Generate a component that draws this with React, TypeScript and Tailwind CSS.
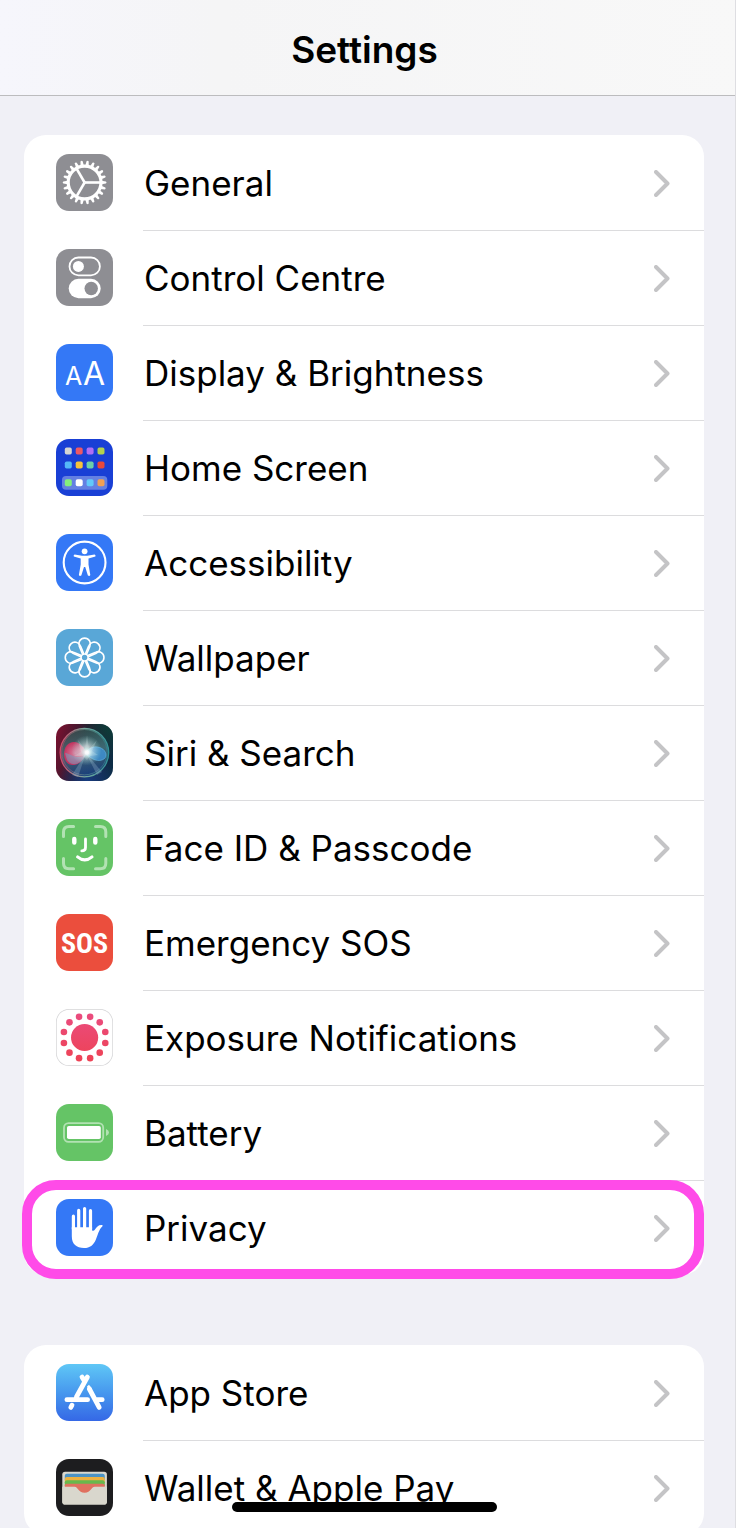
import type { ReactNode } from "react";

const GRAY = "#8e8e93";
const BLUE = "#3478f6";
const GREEN = "#65c466";

function Tile({ fill, children }: { fill: string; children: ReactNode }) {
  return (
    <svg viewBox="0 0 57 57" className="size-[57px] shrink-0" aria-hidden="true">
      <rect width="57" height="57" rx="13" fill={fill} />
      {children}
    </svg>
  );
}

function spin(count: number, offset = 0) {
  return Array.from({ length: count }, (_, i) => offset + (i * 360) / count);
}

function GearIcon() {
  return (
    <Tile fill={GRAY}>
      <g transform="translate(28.6 28.5)" stroke="#fff" fill="none">
        <circle r="16.4" strokeWidth="3.2" />
        {spin(22).map((a) => (
          <path key={a} transform={`rotate(${a})`} d="M17 -1.7L21.3 -1.1Q22.6 0 21.3 1.1L17 1.7Z" fill="#fff" stroke="none" />
        ))}
        {spin(3).map((a) => (
          <path key={a} transform={`rotate(${a})`} d="M0 0H15.5" strokeWidth="2.6" />
        ))}
      </g>
    </Tile>
  );
}

function ControlIcon() {
  return (
    <Tile fill={GRAY}>
      <rect x="13.5" y="8.5" width="30.4" height="17.8" rx="8.9" fill="none" stroke="#fff" strokeWidth="1.8" />
      <circle cx="22.4" cy="17.4" r="5.5" fill="#fff" />
      <rect x="12.7" y="29.8" width="32" height="19.4" rx="9.7" fill="#fff" />
      <circle cx="35.2" cy="39.5" r="6.7" fill={GRAY} />
    </Tile>
  );
}

function DisplayIcon() {
  return (
    <Tile fill={BLUE}>
      <g fill="#fff" fontFamily="Inter, sans-serif" textAnchor="middle">
        <text x="17.6" y="41" fontSize="25">A</text>
        <text x="38" y="41" fontSize="32">A</text>
      </g>
    </Tile>
  );
}

const APP_COLORS = [
  ["#d5d5d3", "#ee5864", "#b06ef4", "#b3d14e"],
  ["#55b9f8", "#f7c23c", "#6bd0a9", "#e8493b"],
  ["#84ef7c", "#ffffff", "#62c9fa", "#f2a052"],
];

function HomeIcon() {
  return (
    <Tile fill="#193fd5">
      <rect x="6" y="37" width="45.3" height="13.8" rx="4" fill="#6480e2" />
      {APP_COLORS.map((row, r) =>
        row.map((c, i) => (
          <rect key={c} x={8.8 + i * 10.9} y={[8.6, 22.5, 40.3][r]} width="7" height="7" rx="1.8" fill={c} />
        )),
      )}
    </Tile>
  );
}

function AccessibilityIcon() {
  return (
    <Tile fill={BLUE}>
      <circle cx="28.6" cy="28.5" r="20.9" fill="none" stroke="#fff" strokeWidth="2.1" />
      <circle cx="28.6" cy="17.3" r="2.9" fill="#fff" />
      <path
        d="M18.6 20.6L26 21.8H31.2L38.6 20.6Q40 21 39.4 22.4L32.5 24.6V30.5L34.3 40.9Q33.6 42.6 31.9 41.4L29.2 33H28L25.3 41.4Q23.6 42.6 22.9 40.9L24.7 30.5V24.6L17.8 22.4Q17.2 21 18.6 20.6Z"
        fill="#fff"
      />
    </Tile>
  );
}

function WallpaperIcon() {
  return (
    <Tile fill="#59a7d7">
      <g transform="translate(28.6 28.5)" fill="none" stroke="#fff" strokeWidth="1.6">
        <circle r="3.5" />
        {spin(8).map((a) => (
          <path key={a} transform={`rotate(${a})`} strokeLinejoin="round" d="M-2 -3.2L-5.3 -11.2A5.8 5.8 0 1 1 5.3 -11.2L2 -3.2" />
        ))}
      </g>
    </Tile>
  );
}

function SiriIcon() {
  return (
    <Tile fill="url(#siri-base)">
      <defs>
        <linearGradient id="siri-base" x1="0" y1=".3" x2="1" y2=".6">
          <stop offset="0" stopColor="#74122f" />
          <stop offset=".45" stopColor="#2d1a30" />
          <stop offset="1" stopColor="#0d2c45" />
        </linearGradient>
        <linearGradient id="siri-orb" x1=".3" y1="0" x2=".5" y2="1">
          <stop offset="0" stopColor="#30544e" />
          <stop offset=".5" stopColor="#4b7c86" />
          <stop offset="1" stopColor="#183f7d" />
        </linearGradient>
        <linearGradient id="siri-ring" x1="0" y1=".5" x2="1" y2=".5">
          <stop offset="0" stopColor="#d74668" />
          <stop offset=".5" stopColor="#78a99d" />
          <stop offset="1" stopColor="#2f9298" />
        </linearGradient>
        <radialGradient id="siri-pink">
          <stop offset="0" stopColor="#e889a8" />
          <stop offset="1" stopColor="#d0305f" />
        </radialGradient>
        <radialGradient id="siri-glow">
          <stop offset="0" stopColor="#fff" />
          <stop offset=".3" stopColor="#fff" stopOpacity=".8" />
          <stop offset="1" stopColor="#9fe8e0" stopOpacity="0" />
        </radialGradient>
        <radialGradient id="siri-corner" cx="1" cy="0" r=".6">
          <stop offset="0" stopColor="#0b3f36" />
          <stop offset="1" stopColor="#0b3f36" stopOpacity="0" />
        </radialGradient>
        <radialGradient id="siri-foot" cx=".55" cy="1" r=".5">
          <stop offset="0" stopColor="#163c80" />
          <stop offset="1" stopColor="#163c80" stopOpacity="0" />
        </radialGradient>
      </defs>
      <rect width="57" height="57" rx="13" fill="url(#siri-corner)" />
      <rect width="57" height="57" rx="13" fill="url(#siri-foot)" />
      <circle cx="28.4" cy="28.6" r="24.3" fill="url(#siri-orb)" fillOpacity=".75" stroke="url(#siri-ring)" strokeWidth="1.3" />
      <circle cx="28.4" cy="28.2" r="22.7" fill="none" stroke="url(#siri-ring)" strokeWidth=".7" strokeOpacity=".7" />
      <path d="M31 29C26 37 23 41 17 41C11 41 8 36 8 30C8 23 12 18 18 18C24 18 28 24 31 29Z" fill="url(#siri-pink)" fillOpacity=".9" />
      <path d="M11 36C17 44 25 40 30 30C21 37 16 30 9 29" fill="#6ea6c6" fillOpacity=".5" />
      <path d="M29 29C35 22 40 22 45 24C51 27 52 34 46 36C40 38 34 34 29 29Z" fill="#3f91d0" fillOpacity=".85" stroke="#61b6df" strokeWidth=".6" />
      <path d="M30 29L16 51L22 53ZM30 29L46 48L41 51Z" fill="#8dabc5" fillOpacity=".35" />
      <circle cx="30.5" cy="26.5" r="15" fill="url(#siri-glow)" fillOpacity=".75" />
      <path d="M22 16L29 25L31 11L33 25L41 16L36 27L42 31L34 32L31 36L27 32L18 32L25 28Z" fill="#e8fffb" fillOpacity=".2" />
      <circle cx="31" cy="28.5" r="6" fill="url(#siri-glow)" />
    </Tile>
  );
}

function FaceIcon() {
  return (
    <Tile fill={GREEN}>
      <g fill="none" stroke="#fff" strokeLinecap="round">
        <path
          strokeOpacity=".5"
          strokeWidth="3"
          d="M7.5 17.6V13Q7.5 7.5 13 7.5H17.6M39.5 7.5H44.3Q49.8 7.5 49.8 13V17.6M49.8 39.5V44.3Q49.8 49.8 44.3 49.8H39.5M17.6 49.8H13Q7.5 49.8 7.5 44.3V39.5"
        />
        <path strokeWidth="4.4" d="M18.3 20V23.6M39.3 20V23.6" />
        <path strokeWidth="2.8" d="M29.5 20V28.6Q29.5 31.9 25.8 31.9" />
        <path strokeWidth="3.1" d="M21.6 37.9Q28.7 44 36 37.9" />
      </g>
    </Tile>
  );
}

function SosIcon() {
  return (
    <span className="flex size-[57px] shrink-0 items-center justify-center rounded-[13px] bg-[#eb4e3d] pt-0.5 font-['Liberation_Sans_Narrow','Roboto_Condensed',sans-serif] text-[28px] leading-none font-bold text-white">
      SOS
    </span>
  );
}

function ExposureIcon() {
  return (
    <Tile fill="#d4d4d6">
      <defs>
        <linearGradient id="exposure" gradientUnits="userSpaceOnUse" x1="0" y1="-25" x2="0" y2="25">
          <stop offset="0" stopColor="#ea4c80" />
          <stop offset="1" stopColor="#ee4253" />
        </linearGradient>
      </defs>
      <rect x=".7" y=".7" width="55.6" height="55.6" rx="12.4" fill="#fff" />
      <g transform="translate(28.6 28.5)" fill="url(#exposure)">
        <circle r="13.6" />
        {spin(12, 15).map((a) => (
          <circle
            key={a}
            cx={21.4 * Math.cos((a * Math.PI) / 180)}
            cy={21.4 * Math.sin((a * Math.PI) / 180)}
            r="3.3"
          />
        ))}
      </g>
    </Tile>
  );
}

function BatteryIcon() {
  return (
    <Tile fill={GREEN}>
      <rect x="8" y="19.1" width="39.2" height="18.8" rx="4.6" fill="none" stroke="#fff" strokeOpacity=".5" strokeWidth="1.8" />
      <path d="M50 25.1Q53 26.3 53 28.5T50 31.9Z" fill="#fff" fillOpacity=".5" />
      <rect x="11" y="22" width="33.8" height="13" rx="1.8" fill="#fff" />
    </Tile>
  );
}

function HandIcon() {
  return (
    <Tile fill={BLUE}>
      <path d="M17.4 17.2V30M22.7 11.4V30M28.6 9.6V30M34.5 11.7V30" stroke="#fff" strokeWidth="3.2" strokeLinecap="round" />
      <path
        d="M15.8 28.3H36.1V31.4Q37.6 32.4 38.8 30.8C40.5 28 42.5 25.8 46 26.1Q47.3 26.5 46.3 27.6C42.6 31 42 36 39.8 40.7C37.4 46.2 34 49 28 49C20.4 49 15.8 45.3 15.8 37.3Z"
        fill="#fff"
      />
    </Tile>
  );
}

function StoreIcon() {
  return (
    <Tile fill="url(#store)">
      <defs>
        <linearGradient id="store" x1="0" y1="0" x2="0" y2="1">
          <stop offset="0" stopColor="#5fc7f6" />
          <stop offset=".5" stopColor="#4798ee" />
          <stop offset="1" stopColor="#3568e6" />
        </linearGradient>
      </defs>
      <g stroke="#fff" strokeWidth="4.8" strokeLinecap="round">
        <path d="M31.4 13L20.4 33M26 13L28.6 17.4M16 41.2L14.8 43.4M10.9 35.7H31.6M41 35.7H46.2" />
        <path d="M33.4 25L43.2 43.4" />
      </g>
      <path d="M31 22.4L33 20.8L35.8 24.4L32.6 27Z" fill="#fff" />
    </Tile>
  );
}

function WalletIcon() {
  return (
    <Tile fill="#1d1d1f">
      <rect x="6.3" y="12.8" width="44.6" height="32.7" rx="2.8" fill="#d9d7cd" />
      <path d="M8.8 16.8Q8.8 14.8 10.8 14.8H46.6Q48.8 14.8 48.8 16.8V21H8.8Z" fill="#4c93c4" />
      <path d="M8.8 20Q8.8 18 10.8 18H46.6Q48.8 18 48.8 20V24H8.8Z" fill="#edb13f" />
      <path d="M8.8 23.3Q8.8 21.3 10.8 21.3H46.6Q48.8 21.3 48.8 23.3V27H8.8Z" fill="#68b84c" />
      <path d="M8.8 26.6Q8.8 24.7 10.8 24.7H46.6Q48.8 24.7 48.8 26.6V30L28.8 36L8.8 30Z" fill="#e0705f" />
      <path d="M6.3 27.8H18.5C22.3 27.8 22 33.8 28.6 33.8S34.9 27.8 38.7 27.8H50.9V42.7Q50.9 45.5 48.1 45.5H9.1Q6.3 45.5 6.3 42.7Z" fill="#d9d7cd" />
    </Tile>
  );
}

type Item = { label: string; icon: ReactNode; highlighted?: boolean };

const GROUPS: Item[][] = [
  [
    { label: "General", icon: <GearIcon /> },
    { label: "Control Centre", icon: <ControlIcon /> },
    { label: "Display & Brightness", icon: <DisplayIcon /> },
    { label: "Home Screen", icon: <HomeIcon /> },
    { label: "Accessibility", icon: <AccessibilityIcon /> },
    { label: "Wallpaper", icon: <WallpaperIcon /> },
    { label: "Siri & Search", icon: <SiriIcon /> },
    { label: "Face ID & Passcode", icon: <FaceIcon /> },
    { label: "Emergency SOS", icon: <SosIcon /> },
    { label: "Exposure Notifications", icon: <ExposureIcon /> },
    { label: "Battery", icon: <BatteryIcon /> },
    { label: "Privacy", icon: <HandIcon />, highlighted: true },
  ],
  [
    { label: "App Store", icon: <StoreIcon /> },
    { label: "Wallet & Apple Pay", icon: <WalletIcon /> },
  ],
];

function Row({ item, divided }: { item: Item; divided: boolean }) {
  return (
    <li className="relative">
      <a href="#" className="flex h-[95px] items-center gap-[30px] pl-8">
        {item.icon}
        <span
          className={`flex h-full min-w-0 flex-1 items-center justify-between border-t pr-[34px] pl-px ${divided ? "border-[#dcdcde]" : "border-transparent"}`}
        >
          <span className="truncate text-[35px] leading-[48px]">{item.label}</span>
          <svg viewBox="0 0 16 27" className="h-[27px] w-4 shrink-0" fill="none" aria-hidden="true">
            <path d="M2 2L13.5 13.5L2 25" stroke="#c4c4c6" strokeWidth="4" strokeLinecap="round" strokeLinejoin="round" />
          </svg>
        </span>
      </a>
      {item.highlighted && (
        <span className="pointer-events-none absolute -inset-x-0 top-0 -bottom-1 -ml-0.5 rounded-[34px] border-10 border-[#ff4be8]" />
      )}
    </li>
  );
}

export default function App() {
  return (
    <div className="relative flex h-dvh flex-col overflow-hidden border-r border-[#dedee2] bg-[#f0f0f6] font-[Inter,sans-serif] text-black">
      <header className="flex h-24 shrink-0 items-center justify-center border-b border-[#bcbcbe] bg-linear-to-r from-[#f6f6fc] via-[#f5f5f6] via-30% to-[#f8f8f8] pt-1 pr-1.5">
        <h1 className="text-[37px] leading-[48px] font-semibold">Settings</h1>
      </header>
      <main className="flex min-h-0 flex-1 flex-col gap-[70px] overflow-y-auto pt-[39px] pr-[31px] pl-6 [scrollbar-width:none]">
        {GROUPS.map((group) => (
          <ul key={group[0].label} className="shrink-0 rounded-[22px] bg-white">
            {group.map((item, i) => (
              <Row key={item.label} item={item} divided={i > 0} />
            ))}
          </ul>
        ))}
      </main>
      <div className="pointer-events-none absolute inset-x-0 bottom-4 flex justify-center pr-1.5">
        <div className="h-2.5 w-[265px] rounded-full bg-black" />
      </div>
    </div>
  );
}
